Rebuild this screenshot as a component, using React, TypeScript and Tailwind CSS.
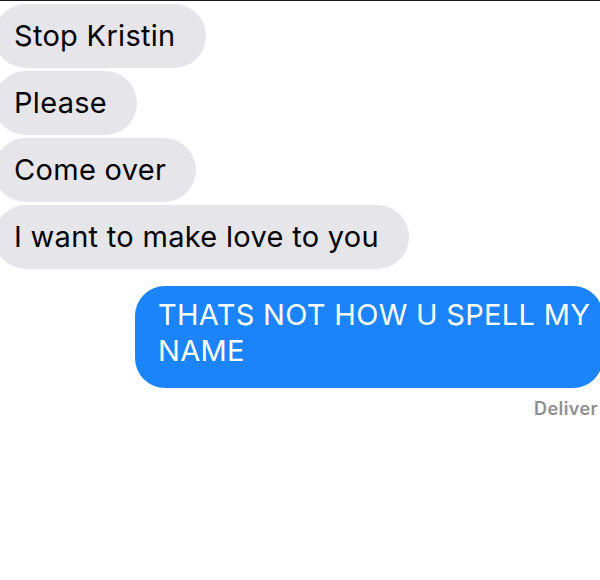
import React from "react";

const incoming = ["Stop Kristin", "Please", "Come over", "I want to make love to you"];

export default function App() {
  return (
    <div
      className="w-[600px] h-[580px] overflow-hidden bg-white border-t border-[#1a1a1a]"
      style={{ fontFamily: "Inter, 'Liberation Sans', sans-serif" }}
    >
      {/* received messages, thread is cropped on the left */}
      <div className="flex flex-col items-start gap-[3px] pt-[3px]">
        {incoming.map((txt) => (
          <div
            key={txt}
            className="-ml-[6px] h-[64px] flex items-center rounded-[32px] bg-[#e5e5ea] pl-[20px] pr-[30px] text-[29px] tracking-[0.3px] text-black whitespace-nowrap"
          >
            {txt}
          </div>
        ))}
      </div>

      {/* sent message */}
      <div className="mt-[17px] ml-[135px] w-[468px] h-[102px] rounded-[30px] bg-[#1b84fa] pl-[23px] pt-[11px] text-[29px] tracking-[0.3px] leading-[36px] text-white whitespace-nowrap">
        THATS NOT HOW U SPELL MY
        <br />
        NAME
      </div>
      <div className="mt-[7px] flex justify-end pr-[2px]">
        <span className="text-[18px] tracking-[0.4px] font-semibold text-[#8e8e93]">Deliver</span>
      </div>
    </div>
  );
}
